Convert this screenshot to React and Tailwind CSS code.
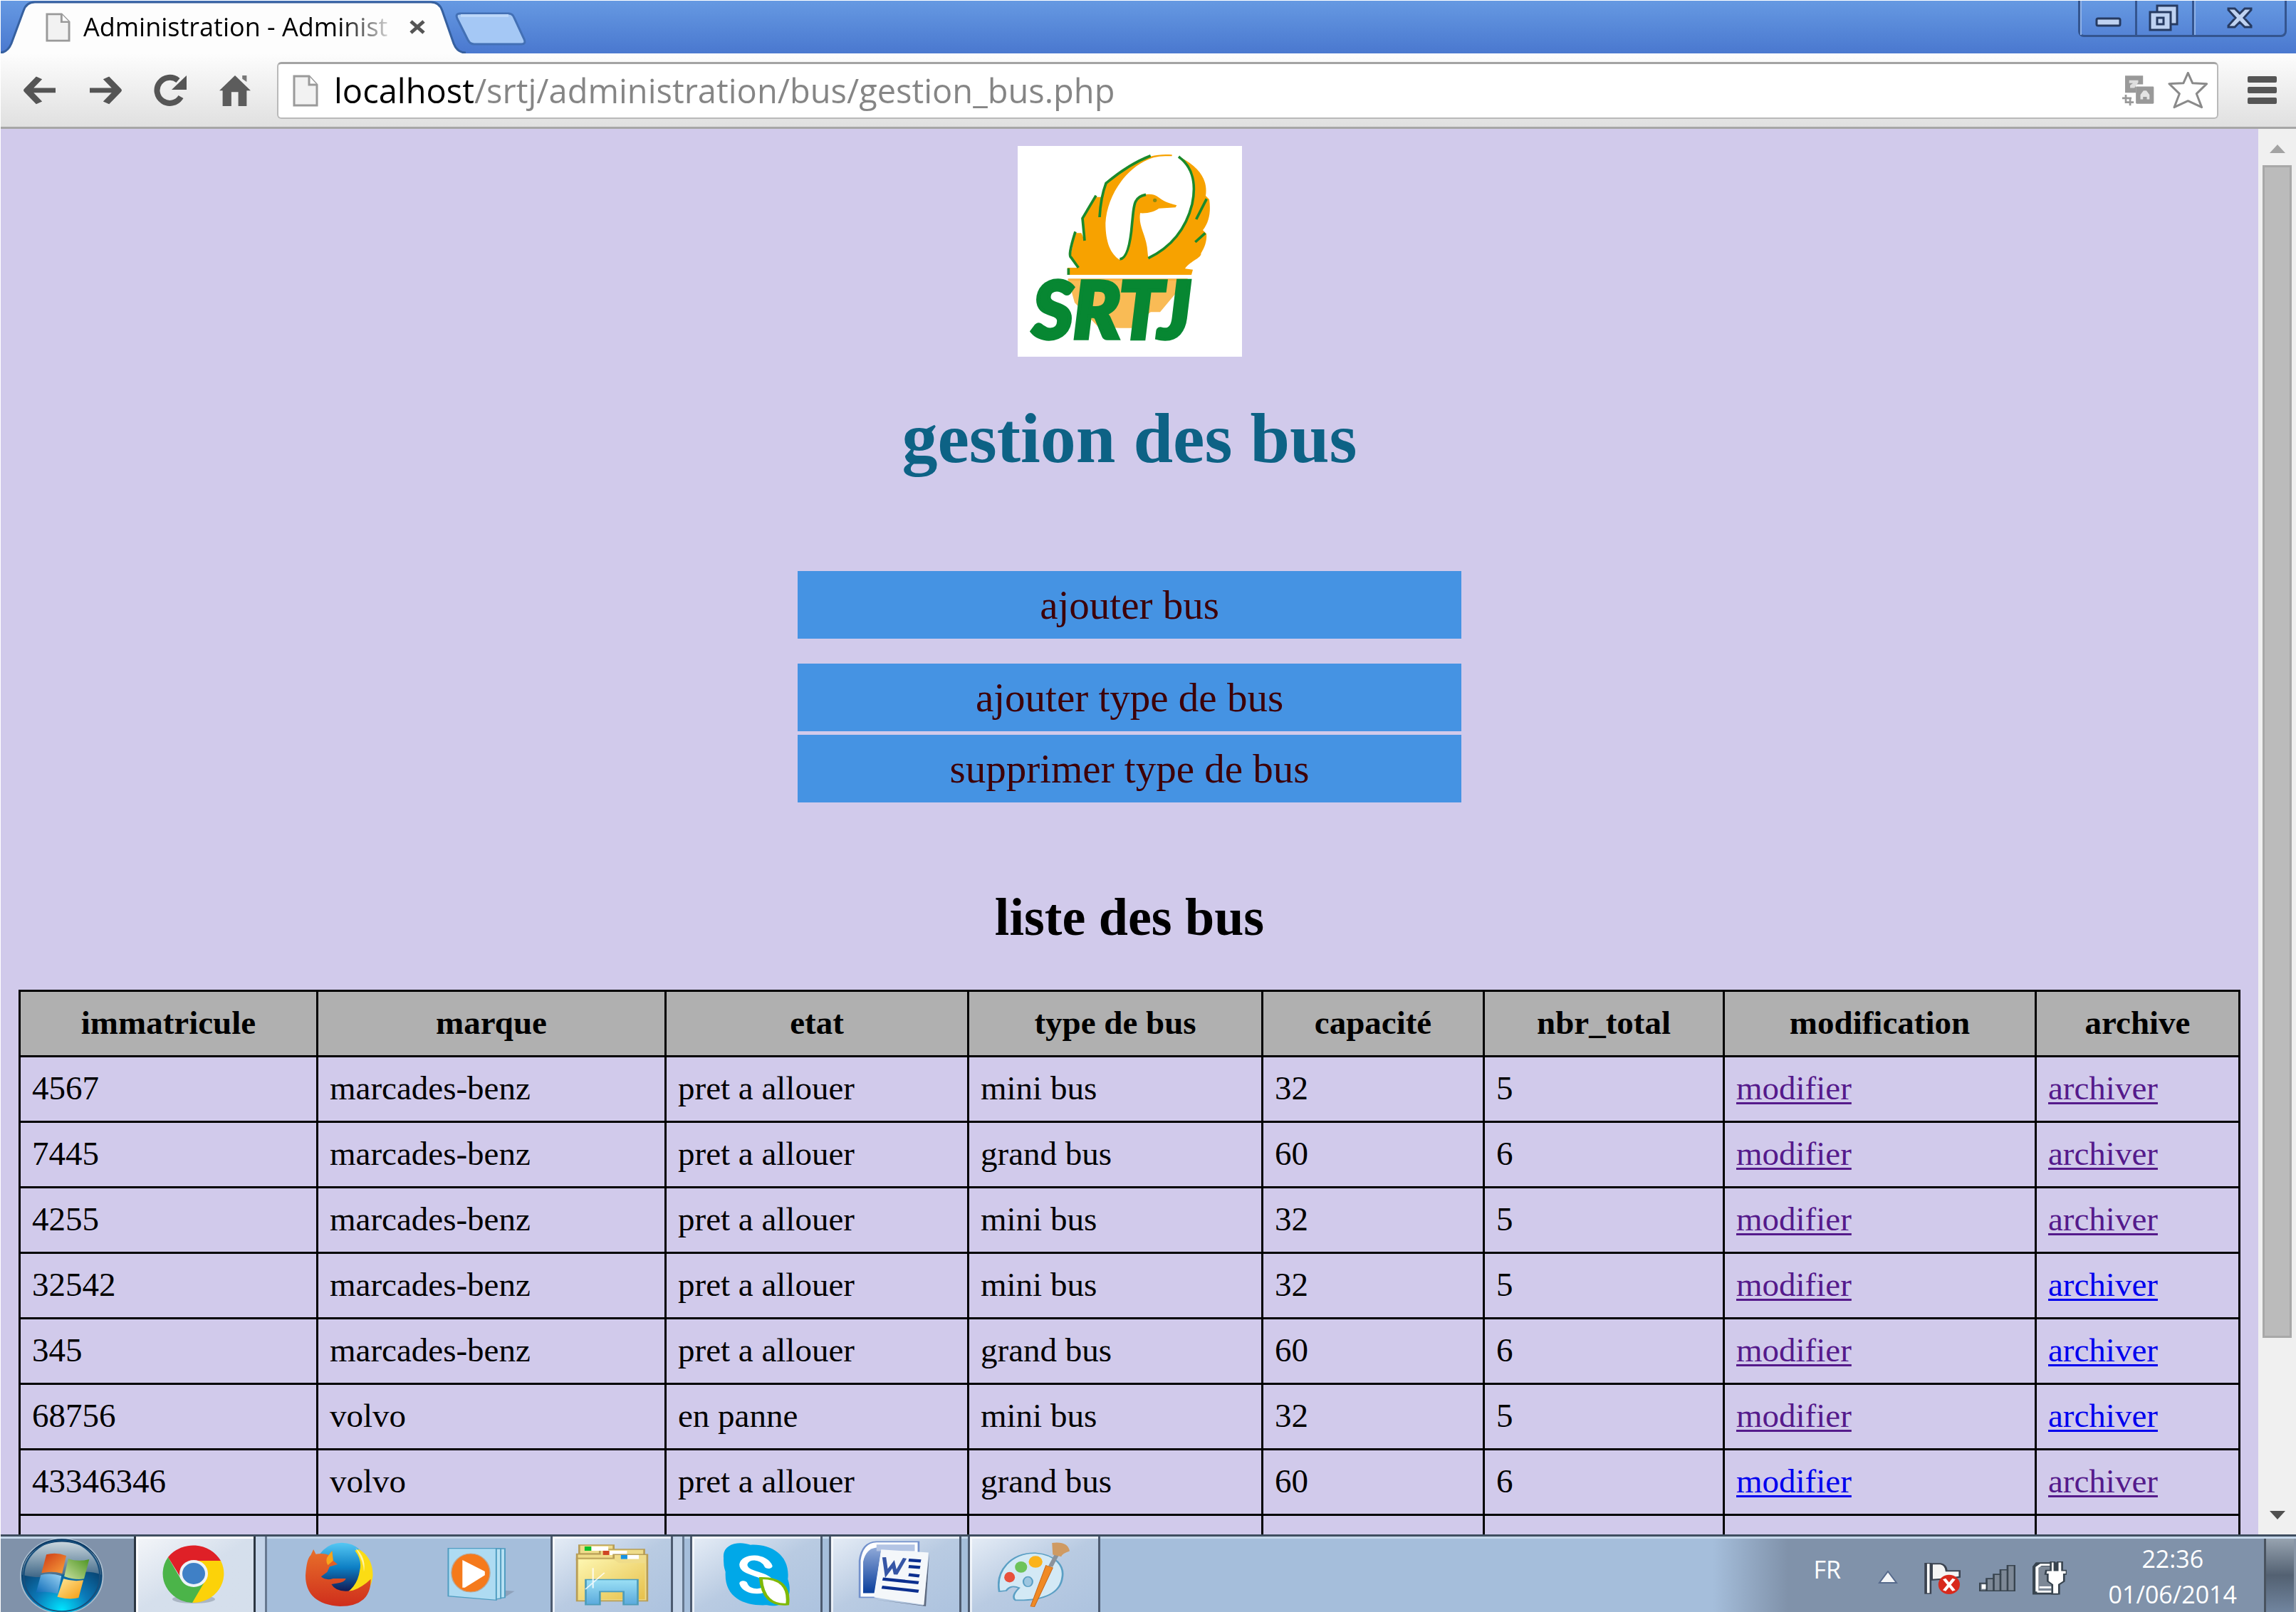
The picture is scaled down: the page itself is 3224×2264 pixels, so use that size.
import React from "react";

/* Small artwork helper: the drawing fills whatever box its classes give it. */
function Art({ box, className, children, label }) {
  return (
    <svg
      viewBox={box}
      preserveAspectRatio="none"
      className={`block shrink-0 ${className}`}
      role={label ? "img" : undefined}
      aria-label={label}
      aria-hidden={label ? undefined : true}
    >
      {children}
    </svg>
  );
}

/* ---------- window frame ---------- */

function PageIcon({ className }) {
  return (
    <Art box="0 0 36 45" className={className}>
      <path d="M2 2H23L34 14V43H2Z" fill="#f2f2f2" stroke="#9a9a9a" strokeWidth="3" />
      <path d="M23 2V14H34" fill="#fff" stroke="#9a9a9a" strokeWidth="3" />
    </Art>
  );
}

function TitleBar() {
  return (
    <header className="flex h-[74px] shrink-0 items-start justify-between bg-linear-to-b from-[#6699e2] to-[#4a78cf]">
      <div className="flex h-full">
        <div className="relative h-full w-[653px]">
          <Art box="0 0 653 74" className="absolute inset-0 h-full w-full">
            <path d="M0 74H653Q641 74 636 60L620 14Q616 2 604 2H48Q36 2 32 14L15 60Q10 74 0 74Z" fill="#fdfdfd" />
            <path d="M0 73Q10 72 15 60L32 14Q36 2 48 2H604Q616 2 620 14L636 60Q641 73 653 73" fill="none" stroke="#36609f" strokeWidth="3" />
          </Art>
          <div className="relative flex h-full items-center pl-[63px]">
            <PageIcon className="h-[41px] w-[35px]" />
            <h2 className="ml-[18px] w-[438px] overflow-hidden bg-linear-to-r from-black from-82% to-black/15 to-98% bg-clip-text font-['Open_Sans',sans-serif] text-[36px] leading-[50px] whitespace-nowrap text-transparent">
              Administration - Administ
            </h2>
            <button type="button" aria-label="Fermer l'onglet" className="ml-[19px]">
              <Art box="0 0 24 20" className="h-5 w-6">
                <path d="M3 2L21 18M21 2L3 18" stroke="#555" strokeWidth="5" />
              </Art>
            </button>
          </div>
        </div>
        <button type="button" aria-label="Nouvel onglet" className="-ml-4 mt-4 self-start">
          <Art box="0 0 102 48" className="h-12 w-[102px]">
            <path d="M8 2H76Q82 2 84 8L98 38Q101 45 94 45H28Q22 45 19 39L4 9Q1 2 8 2Z" fill="#a5c8f5" stroke="#4370b5" strokeWidth="3" />
            <path d="M9 5H76" stroke="#bcd7f9" strokeWidth="4" />
          </Art>
        </button>
      </div>
      <div className="mr-[13px] flex h-[51px] rounded-b-lg border-x-3 border-b-3 border-[#34558f] bg-linear-to-b from-[#6699e2] to-[#5584d6]">
        <button type="button" aria-label="Réduire" className="flex w-[77px] items-center justify-center border-l-2 border-[#8fb2e8]">
          <Art box="0 0 37 14" className="mt-3 h-[14px] w-[37px]">
            <rect x="2" y="2" width="33" height="10" rx="2" fill="#bfd2f1" stroke="#263a61" strokeWidth="3" />
          </Art>
        </button>
        <button type="button" aria-label="Restaurer" className="flex w-[80px] items-center justify-center border-l-3 border-[#34558f] pr-1">
          <Art box="0 0 42 38" className="h-[38px] w-[42px]">
            <path d="M12 2H40V28H12Z" fill="#bfd2f1" stroke="#263a61" strokeWidth="3" />
            <path d="M2 11H31V36H2Z" fill="#bfd2f1" stroke="#263a61" strokeWidth="3" />
            <rect x="12" y="19" width="9" height="9" fill="#bfd2f1" stroke="#263a61" strokeWidth="3" />
          </Art>
        </button>
        <button type="button" aria-label="Fermer" className="flex w-[130px] items-center justify-center border-l-3 border-[#34558f] shadow-[inset_2px_0_0_#8fb2e8]">
          <Art box="0 0 36 30" className="h-[30px] w-9">
            <path d="M2 2H11L18 9L25 2H34V4L24 15L34 26V28H25L18 21L11 28H2V26L12 15L2 4Z" fill="#bfd2f1" stroke="#263a61" strokeWidth="3" />
          </Art>
        </button>
      </div>
    </header>
  );
}

function Toolbar() {
  return (
    <nav aria-label="Navigation" className="flex h-[106px] shrink-0 items-center border-b-3 border-[#a6a6a6] bg-linear-to-b from-[#fdfdfd] to-[#e0e0e0] pl-[31px]">
      <button type="button" aria-label="Précédent">
        <Art box="62 318 96 122" className="h-[41px] w-12">
          <path d="M108 328L74 380L108 432M74 380H154" fill="none" stroke="#555" strokeWidth="20" strokeLinejoin="round" />
        </Art>
      </button>
      <button type="button" aria-label="Suivant" className="ml-11">
        <Art box="242 318 96 122" className="h-[41px] w-12">
          <path d="M292 328L326 380L292 432M326 380H246" fill="none" stroke="#555" strokeWidth="20" strokeLinejoin="round" />
        </Art>
      </button>
      <button type="button" aria-label="Actualiser" className="ml-[42px]">
        <Art box="0 0 50 46" className="h-[46px] w-[50px]">
          <path d="M40 32A18 18 0 1 1 36 9" fill="none" stroke="#555" strokeWidth="8" />
          <path d="M48 2V22H27Z" fill="#555" />
        </Art>
      </button>
      <button type="button" aria-label="Accueil" className="ml-11">
        <Art box="605 315 86 132" className="h-11 w-11">
          <path d="M648 318L691 382H680V447H657V388H638V447H614V382H605Z" fill="#5c5c5c" />
          <path d="M668 318H680V345L668 332Z" fill="#777" />
        </Art>
      </button>
      <form className="ml-[37px] flex h-[80px] min-w-0 flex-1 items-center rounded-md border-2 border-t-3 border-[#b9b9b9] border-t-[#a3a3a3] bg-white pl-5" onSubmit={(e) => e.preventDefault()}>
        <PageIcon className="h-[45px] w-9" />
        <input
          type="text"
          aria-label="Adresse"
          defaultValue="localhost/srtj/administration/bus/gestion_bus.php"
          className="ml-[22px] h-[70px] min-w-0 flex-1 bg-linear-to-r from-black from-[197px] to-[#858585] to-[197px] bg-clip-text font-['Open_Sans',sans-serif] text-[47px] text-transparent outline-none"
        />
        <button type="button" aria-label="Traduire cette page">
          <Art box="537 320 134 128" className="h-[43px] w-[45px]">
            <path d="M549 321H624V357H594V392H549Z" fill="#999" />
            <path d="M566 340H604V349L588 372H570V361L582 352H566Z" fill="#dedede" />
            <rect x="594" y="366" width="75" height="72" rx="4" fill="#999" />
            <path d="M613 420V400L626 383H638L651 400V420H640V409H624V420Z" fill="#e4e4e4" />
            <path d="M537 415H560M552 400V432H585M570 415V446M560 415H576" fill="none" stroke="#999" strokeWidth="8" />
          </Art>
        </button>
        <button type="button" aria-label="Ajouter aux favoris" className="mr-3 ml-[18px]">
          <Art box="730 304 174 156" className="h-[52px] w-[58px]">
            <path d="M818 308L837 351L897 354L854 396L876 453L818 426L760 453L782 396L739 354L799 351Z" fill="#fff" stroke="#8a8a8a" strokeWidth="9" strokeLinejoin="round" />
          </Art>
        </button>
      </form>
      <button type="button" aria-label="Menu" className="mr-[27px] ml-[41px] flex w-[41px] flex-col gap-[6px]">
        <span className="h-[9px] rounded-xs bg-[#555]" />
        <span className="h-[9px] rounded-xs bg-[#555]" />
        <span className="h-[9px] rounded-xs bg-[#555]" />
      </button>
    </nav>
  );
}

/* ---------- page ---------- */

function Logo() {
  return (
    <svg viewBox="90 75 945 888" role="img" aria-label="SRTJ" className="block h-[296px] w-[315px] shrink-0 bg-white">
      <path
        d="M740 112C640 102 560 150 470 225L452 262L437 375L441 290H420L362 380L372 472L358 442H332L312 540L345 588H300V618H822L828 596L795 592C810 565 868 545 862 528C880 500 888 470 885 445L870 430C898 395 904 350 897 300L882 285C890 230 870 170 770 120C830 170 842 240 825 320C800 420 740 500 640 548L635 500C625 440 598 410 606 358C640 360 670 350 685 338L755 334L760 325C720 316 700 305 684 292C660 272 620 275 600 295C575 330 575 400 560 480C555 520 540 545 520 555C480 530 460 480 460 400C465 300 530 180 640 132C670 118 700 118 740 118Z"
        fill="#f7a200"
      />
      <g fill="none" stroke="#1a8a2c" strokeWidth="11">
        <path d="M650 116Q560 150 462 232Q440 290 435 375" />
        <path d="M420 284L363 380L372 474M333 436Q300 540 315 545L346 588M304 590V618" />
        <path d="M768 120C830 165 842 240 825 320C800 420 740 500 640 548" />
        <path d="M630 280C575 290 580 330 572 400Q560 550 520 552" />
        <path d="M886 298L842 384M880 442L838 480" />
      </g>
      <circle cx="668" cy="304" r="8" fill="#8a8a10" />
      <path d="M302 636H806L690 775H650L570 842H520L430 838L330 735Z" fill="#f9bb55" />
      <path d="M302 638H806" stroke="#f5b040" strokeWidth="9" />
      <text x="152" y="884" fill="#078732" stroke="#078732" strokeWidth="16" className="font-['Lato',sans-serif] text-[330px] font-black italic">
        SRTJ
      </text>
    </svg>
  );
}

const ACTIONS = "flex h-[95px] w-full items-center justify-center bg-[#4593e3] text-[57px] leading-[64px] text-[#3d0008]";

const HEADERS = ["immatricule", "marque", "etat", "type de bus", "capacité", "nbr_total", "modification", "archive"];

const BUSES = [
  { cells: ["4567", "marcades-benz", "pret a allouer", "mini bus", "32", "5"], edited: true, archived: true },
  { cells: ["7445", "marcades-benz", "pret a allouer", "grand bus", "60", "6"], edited: true, archived: true },
  { cells: ["4255", "marcades-benz", "pret a allouer", "mini bus", "32", "5"], edited: true, archived: true },
  { cells: ["32542", "marcades-benz", "pret a allouer", "mini bus", "32", "5"], edited: true, archived: false },
  { cells: ["345", "marcades-benz", "pret a allouer", "grand bus", "60", "6"], edited: true, archived: false },
  { cells: ["68756", "volvo", "en panne", "mini bus", "32", "5"], edited: true, archived: false },
  { cells: ["43346346", "volvo", "pret a allouer", "grand bus", "60", "6"], edited: false, archived: true },
];

const CELL = "h-[92px] border-3 border-black px-4 pb-1 text-left";

function RowLink({ visited, children }) {
  return (
    <a href="#bus" className={`underline decoration-3 underline-offset-4 ${visited ? "text-[#551a8b]" : "text-[#0000ee]"}`}>
      {children}
    </a>
  );
}

function BusTable() {
  return (
    <table className="mt-[58px] w-full table-fixed border-collapse text-[47px] leading-[56px] text-black">
      <colgroup>
        <col className="w-[418px]" />
        <col className="w-[489px]" />
        <col className="w-[425px]" />
        <col className="w-[413px]" />
        <col className="w-[311px]" />
        <col className="w-[337px]" />
        <col className="w-[438px]" />
        <col className="w-[286px]" />
      </colgroup>
      <thead>
        <tr className="bg-[#b0b0b0]">
          {HEADERS.map((h) => (
            <th key={h} scope="col" className="h-[92px] border-3 border-black px-4 pb-1 text-center font-bold">
              {h}
            </th>
          ))}
        </tr>
      </thead>
      <tbody>
        {BUSES.map((bus) => (
          <tr key={bus.cells[0]}>
            {bus.cells.map((c, i) => (
              <td key={i} className={CELL}>{c}</td>
            ))}
            <td className={CELL}><RowLink visited={bus.edited}>modifier</RowLink></td>
            <td className={CELL}><RowLink visited={bus.archived}>archiver</RowLink></td>
          </tr>
        ))}
        <tr>
          {HEADERS.map((h) => (
            <td key={h} className={CELL} />
          ))}
        </tr>
      </tbody>
    </table>
  );
}

function ScrollBar() {
  return (
    <div className="flex w-[53px] shrink-0 flex-col items-center bg-[#f0f0f0]">
      <button type="button" aria-label="Défiler vers le haut" className="flex h-[51px] w-full shrink-0 items-center justify-center pt-1">
        <Art box="0 0 22 12" className="h-3 w-[22px]"><path d="M11 0L22 12H0Z" fill="#a3a3a3" /></Art>
      </button>
      <div className="w-full flex-1 px-[6px]">
        <div className="h-[88%] border-3 border-[#a8a8a8] bg-[#bbb]" />
      </div>
      <button type="button" aria-label="Défiler vers le bas" className="flex h-[51px] w-full shrink-0 items-center justify-center pb-1">
        <Art box="0 0 22 12" className="h-3 w-[22px]"><path d="M0 0H22L11 12Z" fill="#505050" /></Art>
      </button>
    </div>
  );
}

/* ---------- taskbar ---------- */

function StartOrb() {
  return (
    <Art box="55 93 245 309" className="h-[103px] w-[118px]">
      <defs>
        <radialGradient id="orb" cx="0.5" cy="0.95" r="0.75">
          <stop offset="0" stopColor="#00e5ff" />
          <stop offset="0.45" stopColor="#0b79b8" />
          <stop offset="1" stopColor="#08355f" />
        </radialGradient>
        <linearGradient id="orbShine" x1="0" y1="0" x2="0" y2="1">
          <stop offset="0" stopColor="#c9d6dd" />
          <stop offset="1" stopColor="#3f6787" />
        </linearGradient>
        <linearGradient id="flagR" x1="0" y1="0" x2="1" y2="1"><stop offset="0" stopColor="#cc3814" /><stop offset="1" stopColor="#f9a13c" /></linearGradient>
        <linearGradient id="flagG" x1="0" y1="1" x2="1" y2="0"><stop offset="0" stopColor="#c9e0a0" /><stop offset="1" stopColor="#4c9420" /></linearGradient>
        <linearGradient id="flagB" x1="0" y1="1" x2="1" y2="0"><stop offset="0" stopColor="#0867b5" /><stop offset="1" stopColor="#9bd4f5" /></linearGradient>
        <linearGradient id="flagY" x1="0" y1="0" x2="1" y2="1"><stop offset="0" stopColor="#fde79a" /><stop offset="1" stopColor="#f59a0c" /></linearGradient>
      </defs>
      <ellipse cx="177" cy="250" rx="120" ry="158" fill="url(#orb)" stroke="#a9bccd" strokeWidth="4" />
      <path d="M62 245C62 60 292 60 292 245Q250 220 177 245Q110 265 62 245Z" fill="url(#orbShine)" />
      <ellipse cx="177" cy="250" rx="111" ry="149" fill="none" stroke="#174f7c" strokeWidth="5" />
      <path d="M132 160Q160 148 190 165L178 240Q150 228 118 238Z" fill="url(#flagR)" />
      <path d="M196 178Q225 192 257 180L242 262Q215 268 184 252Z" fill="url(#flagG)" />
      <path d="M116 246Q145 236 176 250L165 325Q135 312 102 320Z" fill="url(#flagB)" />
      <path d="M182 262Q210 275 240 268L226 342Q200 352 164 338Z" fill="url(#flagY)" />
    </Art>
  );
}

function ChromeIcon() {
  return (
    <Art box="0 0 90 86" className="h-[86px] w-[90px]">
      <ellipse cx="45" cy="78" rx="30" ry="6" fill="#8d99a8" opacity="0.6" />
      <path d="M45 42L9 19A44 41 0 0 1 83 24H45Z" fill="#df2027" />
      <path d="M45 42L83 24A43 41 0 0 1 43 83L60 48Z" fill="#fcd209" />
      <path d="M45 42L60 54L43 83A43 41 0 0 1 9 19L27 50Z" fill="#4bb449" />
      <path d="M9 19L27 48L45 24Z" fill="#df2027" />
      <path d="M45 24H83L60 54Z" fill="#fcd209" />
      <ellipse cx="45" cy="42" rx="20" ry="19" fill="#eef3f8" />
      <ellipse cx="45" cy="42" rx="16" ry="15" fill="#3f80c6" />
    </Art>
  );
}

function FirefoxIcon() {
  return (
    <Art box="885 115 196 270" className="h-[90px] w-[95px]">
      <defs>
        <linearGradient id="globe" x1="0" y1="0" x2="0" y2="1"><stop offset="0" stopColor="#55c8f4" /><stop offset="0.5" stopColor="#0d7fc4" /><stop offset="1" stopColor="#12154f" /></linearGradient>
        <linearGradient id="fox" x1="0" y1="0" x2="0" y2="1"><stop offset="0" stopColor="#e8702a" /><stop offset="1" stopColor="#cf2e1c" /></linearGradient>
      </defs>
      <ellipse cx="990" cy="222" rx="76" ry="105" fill="url(#globe)" />
      <path d="M1040 145Q1080 180 1080 255Q1075 330 1030 365L985 345Q1035 310 1042 235Q1050 190 1028 150Z" fill="#fbdc14" />
      <path d="M1030 140Q1062 180 1054 240Q1055 200 1030 140Z" fill="#fff3a5" />
      <path d="M908 145L915 165Q940 160 952 170L962 152L965 192L978 208L955 218L948 240L930 260Q945 278 965 268L1002 268Q1000 284 975 288L960 292Q975 330 1022 318Q1050 305 1074 270Q1075 385 985 385Q885 375 885 255Q888 185 900 170Z" fill="url(#fox)" />
      <path d="M952 170L962 152L965 192L950 212Q940 190 952 170Z" fill="#f7a51b" />
    </Art>
  );
}

function MediaIcon() {
  return (
    <Art box="1295 150 196 228" className="h-[76px] w-[95px]">
      <path d="M1440 330L1490 335L1465 358L1440 360Z" fill="#7f8ea3" opacity="0.6" />
      <path d="M1320 156H1462V362L1440 366Z" fill="#b9e2f4" stroke="#4f9cc0" strokeWidth="4" />
      <path d="M1310 156H1450V366L1430 370Z" fill="#b9e2f4" stroke="#4f9cc0" strokeWidth="4" />
      <path d="M1298 155H1437V373L1298 356Z" fill="#aedbf2" stroke="#4f9cc0" strokeWidth="4" />
      <ellipse cx="1363" cy="258" rx="56" ry="81" fill="#f57a1c" stroke="#b9a99b" strokeWidth="3" />
      <path d="M1339 204L1404 252V268L1346 320H1339Z" fill="#fff" />
    </Art>
  );
}

function ExplorerIcon() {
  return (
    <Art box="124 132 192 262" className="h-[87px] w-[103px]">
      <defs>
        <linearGradient id="folder" x1="0" y1="0" x2="1" y2="1"><stop offset="0" stopColor="#fdf6b0" /><stop offset="1" stopColor="#e6c04a" /></linearGradient>
        <linearGradient id="stand" x1="0" y1="0" x2="0" y2="1"><stop offset="0" stopColor="#9be0f5" /><stop offset="1" stopColor="#5aa9dc" /></linearGradient>
      </defs>
      <path d="M134 138H224V175H134Z" fill="#efdc8a" stroke="#b79d56" strokeWidth="5" />
      <path d="M128 176H188V156H304V200H128Z" fill="#efdc8a" stroke="#b79d56" strokeWidth="5" />
      <rect x="148" y="144" width="18" height="18" fill="#0cc12c" /><rect x="166" y="144" width="44" height="18" fill="#fff" />
      <rect x="196" y="162" width="17" height="18" fill="#cf4624" /><rect x="213" y="162" width="46" height="18" fill="#fff" />
      <path d="M128 194H224V178H312V374H128Z" fill="#efdc8a" stroke="#b79d56" strokeWidth="5" />
      <rect x="243" y="180" width="17" height="17" fill="#1593e6" /><rect x="260" y="180" width="30" height="17" fill="#fff" />
      <path d="M132 200H224L238 214H306V368H132Z" fill="url(#folder)" />
      <path d="M151 390V284H287V390H250V335H188V390Z" fill="url(#stand)" stroke="#4d9cba" strokeWidth="5" />
      <path d="M170 235V320M150 325L200 255" stroke="#fff" strokeWidth="4" opacity="0.8" />
    </Art>
  );
}

function SkypeIcon() {
  return (
    <Art box="512 114 178 274" className="h-[91px] w-[95px]">
      <path d="M514 180C510 125 550 105 585 125C640 120 690 170 683 270C700 350 670 395 628 380C570 385 515 350 519 240Q513 215 514 180Z" fill="#00a8e8" />
      <path d="M632 215C620 170 570 170 566 208C565 250 630 245 636 285C632 330 575 335 566 288" fill="none" stroke="#fff" strokeWidth="21" strokeLinecap="round" />
      <path d="M612 266Q690 265 682 376Q618 385 612 266Z" fill="#fff" stroke="#7fb906" strokeWidth="9" />
    </Art>
  );
}

function WordIcon() {
  return (
    <Art box="870 106 188 284" className="h-[94px] w-[101px]">
      <defs><linearGradient id="word" x1="0" y1="0" x2="0" y2="1"><stop offset="0" stopColor="#8fa9d8" /><stop offset="1" stopColor="#0a3e9c" /></linearGradient></defs>
      <path d="M874 346V190Q880 112 918 110H1028V170L930 346Z" fill="#fff" stroke="#7391cc" strokeWidth="5" />
      <path d="M883 328V195Q890 140 918 135L930 150L912 328Z" fill="url(#word)" />
      <path d="M918 122H1018V150H918Z" fill="#b3c4e4" />
      <path d="M915 355L1047 384L1056 160L1040 380Z" fill="#5f6b80" />
      <path d="M930 143L1054 156L1042 378L912 346Z" fill="#f4f7fa" />
      <path d="M938 176L944 244L962 205L968 248L992 180" fill="none" stroke="#3555a5" strokeWidth="10" />
      <path d="M1002 188L1034 192M1002 215L1032 219M1002 250L1030 255M934 268L1028 284M932 303L1028 320" stroke="#0b2f8f" strokeWidth="13" />
    </Art>
  );
}

function PaintIcon() {
  return (
    <Art box="1236 114 190 280" className="h-[93px] w-[102px]">
      <path d="M1240 325C1230 240 1270 160 1335 163C1390 170 1410 220 1405 265C1400 330 1360 365 1282 362Q1270 345 1292 310Q1270 295 1258 322Z" fill="#d3e9f5" stroke="#5a9fc4" strokeWidth="5" />
      <ellipse cx="1267" cy="265" rx="14" ry="22" fill="#e8503c" />
      <ellipse cx="1297" cy="222" rx="16" ry="24" fill="#6dc35a" />
      <ellipse cx="1335" cy="200" rx="18" ry="25" fill="#fbb31b" />
      <ellipse cx="1315" cy="284" rx="12" ry="21" fill="#9dc6e0" stroke="#5a9fc4" strokeWidth="4" />
      <path d="M1392 165L1374 220" stroke="#8a929b" strokeWidth="12" />
      <path d="M1362 215L1380 225L1332 390L1322 388Z" fill="#f08a24" stroke="#c8681a" strokeWidth="2" />
      <path d="M1378 120Q1420 112 1424 155Q1405 165 1402 178L1380 170Z" fill="#cf9a62" />
    </Art>
  );
}

const TASK = "flex h-full shrink-0 items-center justify-center border-x-3 border-[#4d5b70] bg-linear-to-br from-[#e6edf6] via-[#b9cbe2] to-[#adc3df] shadow-[inset_3px_3px_0_rgba(255,255,255,0.65)]";
const STACK = "h-full w-4 shrink-0 border-r-3 border-[#66788f] bg-[#c3d3e8]";

function TaskBar() {
  return (
    <footer className="flex h-[109px] shrink-0 items-stretch overflow-hidden border-t-3 border-[#3f4e60] bg-[#a5bedb] shadow-[inset_0_3px_0_#c5d7ea]">
      <button type="button" aria-label="Démarrer" className="flex w-[187px] shrink-0 justify-center border-t-3 border-[#c5d7ea] bg-[#8092aa] pr-4">
        <StartOrb />
      </button>
      <button type="button" aria-label="Google Chrome" className="flex w-[171px] shrink-0 items-center justify-center border-x-3 border-x-[#2b3642] bg-linear-to-br from-[#f4f6f9] via-[#d5dfec] to-[#d5dfec] pr-1 shadow-[inset_3px_3px_0_#fff]">
        <ChromeIcon />
      </button>
      <div className={STACK} />
      <button type="button" aria-label="Firefox" className="ml-[54px] flex items-center"><FirefoxIcon /></button>
      <button type="button" aria-label="Lecteur Windows Media" className="ml-[104px] flex items-center"><MediaIcon /></button>
      <button type="button" aria-label="Explorateur" className={`ml-[50px] w-[172px] ${TASK}`}><ExplorerIcon /></button>
      <div className={STACK} />
      <button type="button" aria-label="Skype" className={`ml-2 w-[186px] ${TASK}`}><SkypeIcon /></button>
      <button type="button" aria-label="Word" className={`ml-[9px] w-[186px] pr-1 ${TASK}`}><WordIcon /></button>
      <button type="button" aria-label="Paint" className={`ml-[9px] w-[186px] ${TASK}`}><PaintIcon /></button>

      <div className="ml-auto flex items-start border-t-3 border-[#c5d7ea] bg-linear-to-r from-[#a5bedb] to-[#8092aa] to-[106px] pl-[142px] font-['Open_Sans',sans-serif] text-[34px] leading-[50px] text-white">
        <span className="mt-[18px] w-[46px]">FR</span>
        <button type="button" aria-label="Icônes cachées" className="mt-[45px] ml-11">
          <Art box="0 0 28 20" className="h-5 w-7">
            <path d="M14 1L26 17H2Z" fill="#f4f6f8" stroke="#566a8c" strokeWidth="2" />
          </Art>
        </button>
        <Art box="574 278 98 142" className="mt-8 ml-[37px] h-[47px] w-[51px]">
          <path d="M584 284V416" stroke="#3b4350" strokeWidth="19" />
          <path d="M594 288H618Q632 292 634 318H670V344L630 352L594 356Z" fill="#f4f4f4" stroke="#3b4350" strokeWidth="6" />
          <path d="M585 288V412" stroke="#fff" strokeWidth="7" />
          <ellipse cx="641" cy="376" rx="29" ry="41" fill="#d8291c" />
          <path d="M628 352L654 402M654 352L628 402" stroke="#fff" strokeWidth="9" />
        </Art>
        <Art box="718 296 97 110" className="mt-[37px] ml-[26px] h-[37px] w-[51px]">
          <path d="M720 372H738V353H757V335H775V316H794V298H813V404H720Z" fill="#7d8896" stroke="#38444f" strokeWidth="5" />
          <path d="M738 372V404M757 353V404M775 335V404M794 316V404" stroke="#38444f" strokeWidth="5" />
          <rect x="725" y="377" width="11" height="19" fill="#fff" />
        </Art>
        <Art box="862 278 90 142" className="mt-8 ml-6 h-[47px] w-12">
          <path d="M876 290H922V410H870V302Z" fill="#7d8896" stroke="#38444f" strokeWidth="17" />
          <path d="M874 406V303L884 292H912M874 406H916V388H880" fill="none" stroke="#fff" strokeWidth="8" />
          <path d="M898 316H910V280H920V316H928V280H940V316H952V332H945V362L932 376V416H914V376L902 362V332H896Z" fill="#fff" stroke="#38444f" strokeWidth="5" />
        </Art>
        <div className="mr-[38px] ml-[59px] flex flex-col items-center pt-[3px]">
          <time>22:36</time>
          <time>01/06/2014</time>
        </div>
        <button type="button" aria-label="Afficher le bureau" className="w-[45px] self-stretch border-x-3 border-[#49535f] border-r-[#8996a6] bg-linear-to-b from-[#97a3b0] via-[#536172] to-[#71859f]" />
      </div>
    </footer>
  );
}

export default function App() {
  return (
    <div className="flex h-screen flex-col overflow-hidden border-t border-l border-white bg-white">
      <TitleBar />
      <Toolbar />
      <div className="flex min-h-0 flex-1">
        <main className="min-w-0 flex-1 overflow-hidden bg-[#d1caeb] px-[25px] pt-6 font-['Liberation_Serif',serif]">
          <div className="flex flex-col items-center">
            <Logo />
            <h1 className="mt-[59px] text-[100px] leading-[112px] font-bold text-[#0d6285]">gestion des bus</h1>
            <div className="mt-[130px] w-[932px]">
              <a href="#ajouter" className={ACTIONS}>ajouter bus</a>
              <div className="mt-[35px] flex flex-col gap-[5px]">
                <a href="#ajouter-type" className={ACTIONS}>ajouter type de bus</a>
                <a href="#supprimer-type" className={ACTIONS}>supprimer type de bus</a>
              </div>
            </div>
            <h2 className="mt-[117px] text-[74px] leading-[88px] font-bold text-black">liste des bus</h2>
          </div>
          <BusTable />
        </main>
        <ScrollBar />
      </div>
      <TaskBar />
    </div>
  );
}
